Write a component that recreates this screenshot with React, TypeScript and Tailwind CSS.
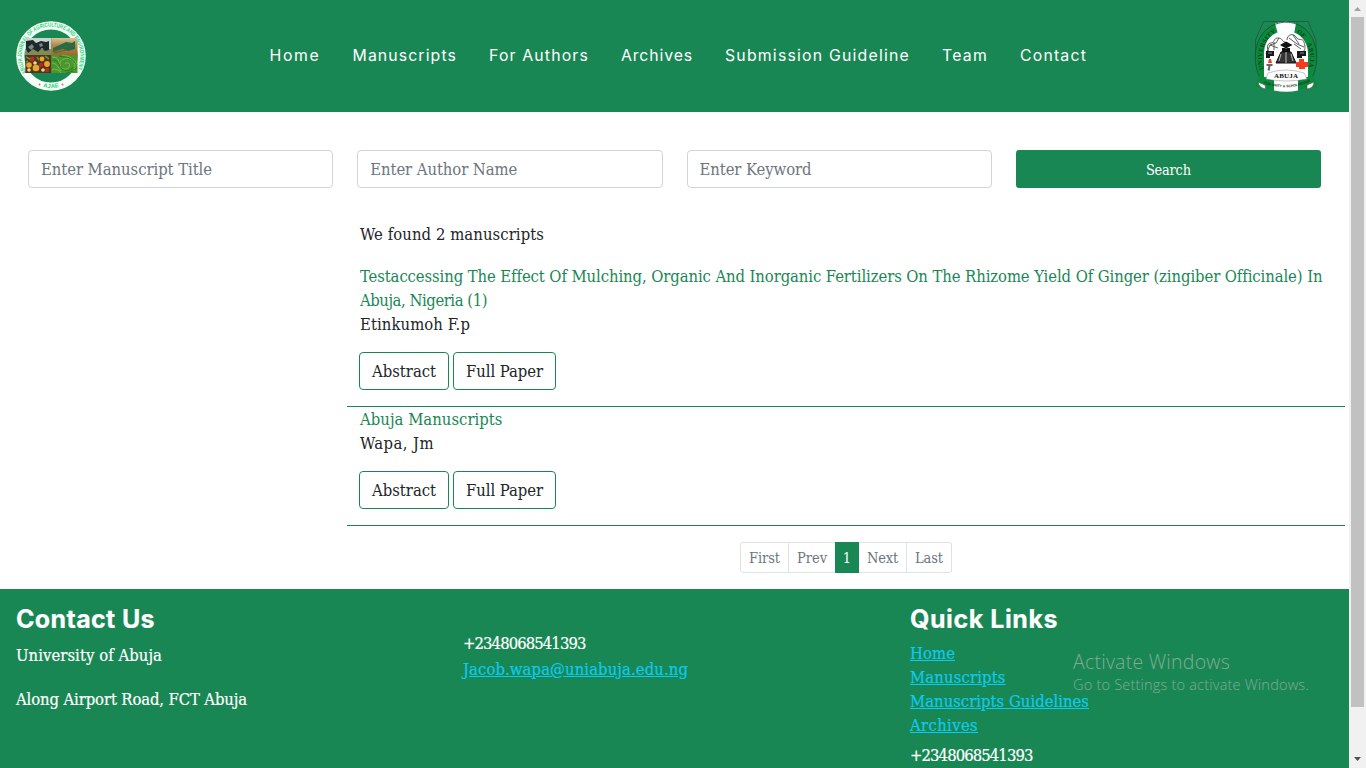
import { useLayoutEffect, useRef, useState } from 'react';

const SLAB = "font-['DejaVu_Serif_Condensed','DejaVu_Serif',serif] [font-stretch:condensed]";
const GEO = "font-['Inter','Open_Sans',sans-serif] [font-stretch:normal]";

/* Text whose tracking is computed so that it takes exactly `w` pixels. */
function Fit({ w, children, className = '' }: { w: number; children: string; className?: string }) {
  const ref = useRef<HTMLSpanElement>(null);
  const [gap, setGap] = useState(0);
  useLayoutEffect(() => {
    const el = ref.current;
    if (!el) return;
    el.style.letterSpacing = '0px';
    const natural = el.getBoundingClientRect().width;
    setGap((w - natural) / children.length);
    el.style.letterSpacing = `${(w - natural) / children.length}px`;
  }, [w, children]);
  return (
    <span ref={ref} className={`inline-block whitespace-nowrap ${className}`} style={{ letterSpacing: `${gap}px` }}>
      {children}
    </span>
  );
}

function JournalLogo() {
  return (
    <svg viewBox="0 0 70 70" className="h-[70px] w-[70px]">
      <defs>
        <path id="ringTop" d="M 10.7 51.4 A 29.3 29.3 0 1 1 59.3 51.4" />
        <path id="ringBottom" d="M 8.4 53 A 32.2 32.2 0 0 0 61.6 53" />
        <linearGradient id="harvest" x1="0" y1="0" x2="0" y2="1">
          <stop offset="0" stopColor="#d8c49b" />
          <stop offset="0.4" stopColor="#b48b4e" />
          <stop offset="1" stopColor="#a0662d" />
        </linearGradient>
      </defs>
      <circle cx="35" cy="35" r="30.7" fill="none" stroke="#f3fff8" strokeWidth="8.2" />
      <text fontSize="6" fontWeight="700" fill="#2fd276" fontFamily="Liberation Sans, sans-serif">
        <textPath href="#ringTop" textLength="122" lengthAdjust="spacingAndGlyphs">ABUJA JOURNAL OF AGRICULTURE AND ENVIRONMENT</textPath>
      </text>
      <text fontSize="6" fontWeight="700" fill="#2fd276" fontFamily="Liberation Sans, sans-serif">
        <textPath href="#ringBottom" startOffset="50%" textAnchor="middle">AJAE</textPath>
      </text>
      <circle cx="23.5" cy="63.5" r="1" fill="#f0596a" />
      <circle cx="46.5" cy="63.5" r="1" fill="#f0596a" />
      <rect x="9.3" y="17" width="26" height="17" fill="#c9d5d4" />
      <path d="M9.3 28h26v6h-26z" fill="#7f8b58" />
      <path d="M10 20l7-1 3 3 5-2 5 1 3-1v9l-4 1-3-3-4 4-5-3-5 4-2-4z" fill="#1e2928" />
      <path d="M12 26l4-3 2 3-3 3zM23 23l3-1 1 3-3 1z" fill="#74878c" />
      <rect x="35.3" y="17" width="26.2" height="17" fill="url(#harvest)" />
      <path d="M37 27l9-4 4-2 6 1 3-2v8l-7 2-5-2-10 3z" fill="#246b48" />
      <path d="M38 29l10-3 10-2M38 32l12-3" stroke="#4b6534" fill="none" />
      <rect x="9.3" y="34" width="26" height="18" fill="#57331b" />
      <g fill="#e7a829">
        <circle cx="13" cy="44" r="2.8" /><circle cx="20" cy="47" r="3.3" /><circle cx="31" cy="43" r="2.9" /><circle cx="26" cy="38" r="2.4" />
      </g>
      <g fill="#b32d24">
        <circle cx="16" cy="38" r="2.5" /><circle cx="25" cy="44" r="2.2" /><circle cx="31" cy="49" r="2.2" />
      </g>
      <g fill="#e8dc8a">
        <circle cx="19" cy="42" r="1.8" /><circle cx="27" cy="49" r="1.8" /><circle cx="13" cy="49" r="1.8" />
      </g>
      <path d="M10 36l4 2M21 36l2 3M29 35l4 3M10 41l2-1" stroke="#5f9736" strokeWidth="1.6" />
      <rect x="35.3" y="34" width="26.2" height="18" fill="#4a972d" />
      <g fill="none" stroke="#84c45e" strokeWidth="0.8">
        <path d="M49 43c2-3 6 0 4 3s-8 3-9-2 5-8 10-6 6 8 4 12" />
        <path d="M36 36c6 0 7 3 7 7M36 42c4 0 6 4 9 8M46 35c7-1 12 3 15 8M36 49c3-2 7 0 9 3" />
      </g>
      <g fill="none" stroke="#26701c" strokeWidth="0.8">
        <path d="M37 39c5-1 6 6 9 9s9 2 11-2M43 35c4 1 12 0 16 7M50 52c4 0 9-3 11-6" />
      </g>
    </svg>
  );
}

function UniversityLogo() {
  return (
    <svg viewBox="0 0 64 72" className="h-[72px] w-16">
      <defs>
        <path id="crestArc" d="M 11.2 52 A 24 28 0 1 1 52.8 52" />
        <path id="motto" d="M 6 62 Q 32 73 58 61" />
      </defs>
      <path d="M9.5 1.5H54L62 20V38L32 62 1.5 38V20z" fill="#1a8755" stroke="#1c5d3e" strokeWidth="0.9" />
      <path d="M6 58C-2 42 0 20 13 9 24 0 40 0 51 9 64 20 66 42 58 58z" fill="#0b8a3c" />
      <path d="M21 3.5Q32 0 42 3.5L40 14H24z" fill="#fff" />
      <path d="M6 58C-2 42 0 20 13 9 24 0 40 0 51 9 64 20 66 42 58 58" fill="none" stroke="#174f32" strokeWidth="0.8" />
      <text fontSize="6.4" fontWeight="700" fill="#073e22" fontFamily="Liberation Serif, serif">
        <textPath href="#crestArc" startOffset="3" textLength="42">UNIVERSITY</textPath>
      </text>
      <text fontSize="6.4" fontWeight="700" fill="#073e22" fontFamily="Liberation Serif, serif">
        <textPath href="#crestArc" startOffset="66">OF</textPath>
      </text>
      <text fontSize="6.4" fontWeight="700" fill="#073e22" fontFamily="Liberation Serif, serif">
        <textPath href="#crestArc" startOffset="81" textLength="24">ABUJA</textPath>
      </text>
      <path d="M10 57V34C10 19 20 11 32 11S54 20 54 34v23l-12 3H22z" fill="#fff" />
      <g fill="none" stroke="#4c4c4c" strokeWidth="0.9">
        <path d="M16 33c-4-4-3-10 1-10s2-5 7-5 4 4 7 4M12 34l4-9 6-2 3-5M33 20c0-6 7-7 9-3s7 1 8 5 2 7-1 10" />
        <path d="M35 18l8 6 7 3M39 15l6 9M16 25l8 3M20 22v8M40 24l7 5" />
      </g>
      <path d="M26 25l6-3.5 6.5 3.5-6.5 3.5zM28 28v4h8v-4z" fill="#111" />
      <path d="M22 43l5-11h10l5 11z" fill="#353535" stroke="#111" />
      <path d="M32 32v11M27 34l-2 7M37 34l2 7" stroke="#ddd" strokeWidth="0.8" />
      <path d="M12 31h8v5h-4v2h-4zM43 31h9v5h-4v2h-5z" fill="#191919" />
      <path d="M14 33h4M46 33h4" stroke="#bbb" strokeWidth="0.7" />
      <path d="M14 43l1-4h2l1 4z" fill="#f53b22" />
      <path d="M12.5 44h6v2h-2l-1 5-2-1 1-4h-2z" fill="#646464" />
      <path d="M45 39h5v3h4v5h-3v2h-6v-2h-3v-5h3z" fill="#f53b22" />
      <path d="M5 56Q32 62 59 56L61 61Q65 66 62 68L53 68Q32 74 11 68L3 67Q0 64 4 61z" fill="#0b8a3c" />
      <path d="M20 59Q32 61 44 59V70.5Q32 73 20 70.5z" fill="#fff" />
      <path d="M14 53Q32 47 50 53L53 59Q32 63 12 59z" fill="#fff" stroke="#64756b" strokeWidth="0.4" />
      <path d="M4 62l7 3 1 4q-7-1-8-7zM60 62l-7 3v4q7-1 7-7z" fill="#fff" stroke="#355747" strokeWidth="0.6" />
      <text x="20" y="58" fontSize="7" fontWeight="700" fill="#111" fontFamily="Liberation Serif, serif" textLength="24">ABUJA</text>
      <text fontSize="3.6" fontWeight="700" fill="#193c29" fontFamily="Liberation Sans, sans-serif">
        <textPath href="#motto" startOffset="4" textLength="48" lengthAdjust="spacingAndGlyphs">FOR UNITY &amp; SCHOLARSHIP</textPath>
      </text>
    </svg>
  );
}

const nav: [string, number][] = [
  ['Home', 51], ['Manuscripts', 104.5], ['For Authors', 100], ['Archives', 72],
  ['Submission Guideline', 185], ['Team', 46], ['Contact', 67],
];
const fields: [string, number][] = [['Enter Manuscript Title', 171], ['Enter Author Name', 147], ['Enter Keyword', 112]];
const links: [string, number][] = [['Home', 45], ['Manuscripts', 95.5], ['Manuscripts Guidelines', 179], ['Archives', 68]];

function Manuscript({ title, author }: { title: [string, number][]; author: [string, number] }) {
  return (
    <article className="border-b border-[#198754] px-3 pb-4">
      <h2 className="flex flex-col items-start pl-px text-[#198754]">
        {title.map(([t, w]) => <Fit key={t} w={w} className="h-6">{t}</Fit>)}
      </h2>
      <p className="h-6 pl-px"><Fit w={author[1]}>{author[0]}</Fit></p>
      <div className="mt-4 flex gap-1">
        <button className="flex h-[38px] w-[90px] items-center justify-center rounded border border-[#198754] pt-0.5"><Fit w={64}>Abstract</Fit></button>
        <button className="flex h-[38px] w-[103px] items-center justify-center rounded border border-[#198754] pt-0.5"><Fit w={77}>Full Paper</Fit></button>
      </div>
    </article>
  );
}

export default function App() {
  return (
    <div className={`relative flex h-[768px] w-[1366px] overflow-hidden bg-white text-[16.5px] leading-[26px] text-[#212529] ${SLAB}`}>
      <div className="w-[1349px] shrink-0">
        <header className="flex h-28 items-center bg-[#198754] pl-4 text-white">
          <JournalLogo />
          <nav className={`ml-[183.5px] flex gap-8 text-[15.8px] ${GEO}`}>
            {nav.map(([t, w]) => <Fit key={t} w={w}>{t}</Fit>)}
          </nav>
          <div className="ml-[167px]"><UniversityLogo /></div>
        </header>

        <main className="h-[477px]">
          <form className="grid grid-cols-4 gap-6 px-7 pt-[38px]">
            {fields.map(([t, w]) => (
              <div key={t} className="flex h-[38px] items-center rounded border border-[#ced4da] px-3 pt-0.5 text-[#6c757d]">
                <Fit w={w}>{t}</Fit>
              </div>
            ))}
            <button type="button" className="h-[38px] rounded-[3px] bg-[#198754] pt-0.5 text-[14.4px] text-white"><Fit w={45}>Search</Fit></button>
          </form>
          <section className="ml-[347px] mt-[34px] w-[998px]">
            <p className="mb-[18px] h-6 pl-[13px]"><Fit w={184}>We found 2 manuscripts</Fit></p>
            <Manuscript
              title={[
                ['Testaccessing The Effect Of Mulching, Organic And Inorganic Fertilizers On The Rhizome Yield Of Ginger (zingiber Officinale) In', 961.5],
                ['Abuja, Nigeria (1)', 127],
              ]}
              author={['Etinkumoh F.p', 110]}
            />
            <Manuscript title={[['Abuja Manuscripts', 142.5]]} author={['Wapa, Jm', 74]} />
            <div className="mt-4 flex h-[31px] justify-center text-[14.5px] leading-[31px] text-[#6c757d]">
              <div className="flex w-[49px] justify-center rounded-l-[3px] border border-[#dee2e6] leading-[30px]"><Fit w={31}>First</Fit></div>
              <div className="flex w-[46px] justify-center border-y border-[#dee2e6] leading-[30px]"><Fit w={30}>Prev</Fit></div>
              <div className="w-6 bg-[#198754] text-center leading-[33px] text-white">1</div>
              <div className="flex w-12 justify-center border-y border-r border-[#dee2e6] leading-[30px]"><Fit w={31}>Next</Fit></div>
              <div className="flex w-[45px] justify-center rounded-r-[3px] border-y border-r border-[#dee2e6] leading-[30px]"><Fit w={28}>Last</Fit></div>
            </div>
          </section>
        </main>

        <footer className="grid h-[179px] grid-cols-[447px_447px_1fr] overflow-hidden bg-[#198754] pl-4 text-white [-webkit-text-stroke:0.2px]">
          <div className="pt-[15px]">
            <h3 className={`flex h-[29px] items-center text-[25px] font-bold ${GEO}`}><Fit w={139}>Contact Us</Fit></h3>
            <p className="mt-[10px] h-6"><Fit w={146}>University of Abuja</Fit></p>
            <p className="mt-5 h-6"><Fit w={231}>Along Airport Road, FCT Abuja</Fit></p>
          </div>
          <div className="pt-[42px]">
            <p className="h-6"><Fit w={122.5}>+2348068541393</Fit></p>
            <a className="mt-0.5 block h-6 text-[#0dcaf0]"><Fit w={225} className="underline">Jacob.wapa@uniabuja.edu.ng</Fit></a>
          </div>
          <div className="pt-[15px]">
            <h3 className={`flex h-[29px] items-center text-[25px] font-bold ${GEO}`}><Fit w={148}>Quick Links</Fit></h3>
            <ul className="mt-2 text-[#0dcaf0]">
              {links.map(([t, w]) => <li key={t} className="h-6"><Fit w={w} className="underline">{t}</Fit></li>)}
            </ul>
            <p className="mt-1.5 h-6"><Fit w={122.5}>+2348068541393</Fit></p>
          </div>
        </footer>
      </div>

      <div className="flex w-[17px] shrink-0 flex-col items-center justify-between bg-[#f1f1f1]">
        <svg viewBox="0 0 17 17" className="h-[17px] w-[17px]"><path d="M5 11h7L8.5 7z" fill="#a3a3a3" /></svg>
        <div className="mb-auto h-[690px] w-[13px] bg-[#c1c1c1]" />
        <svg viewBox="0 0 17 17" className="h-[17px] w-[17px]"><path d="M5 6h7L8.5 10z" fill="#505050" /></svg>
      </div>

      <aside className="absolute left-[1073px] top-[648px] font-['Open_Sans','Noto_Sans',sans-serif] font-light text-[#83aa94] [font-stretch:normal]">
        <p className="text-[19.5px] leading-7"><Fit w={157}>Activate Windows</Fit></p>
        <p className="text-[14.5px] leading-[18px]"><Fit w={236}>Go to Settings to activate Windows.</Fit></p>
      </aside>
    </div>
  );
}
